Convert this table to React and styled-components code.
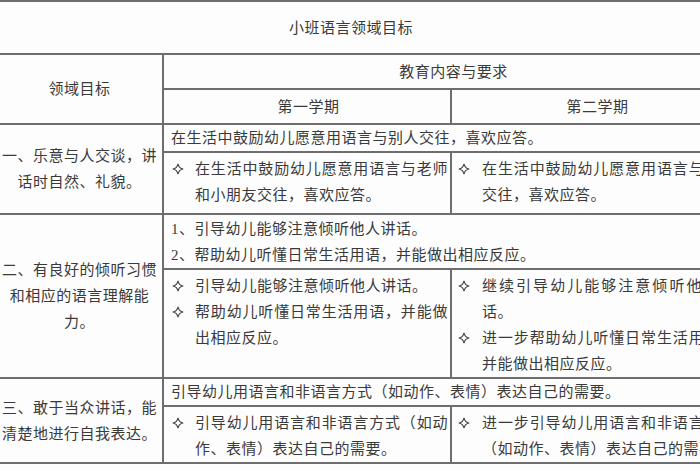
import React from 'react';
import styled, { createGlobalStyle } from 'styled-components';

const GlobalStyle = createGlobalStyle`
  html, body {
    margin: 0;
    padding: 0;
    background: #fff;
  }
`;

const Page = styled.div`
  width: 700px;
  height: 470px;
  overflow: hidden;
  background: #fdfdfd;
  color: #3a3a3a;
  font-family: "Liberation Serif", "Noto Sans CJK SC", serif;
  font-size: 15px;
  letter-spacing: 0.5px;
`;

const Table = styled.table`
  margin-left: -5px;
  width: 745px;
  border-collapse: collapse;
  table-layout: fixed;
`;

const Cell = styled.td`
  border: 2px solid #6e6e6e;
  height: ${p => p.$h}px;
  padding: ${p => p.$pad || '0 4px 0 7px'};
  text-align: ${p => p.$align || 'left'};
  vertical-align: ${p => p.$valign || 'middle'};
  line-height: 26px;
  box-sizing: border-box;
`;

const Line = styled.div`
  white-space: nowrap;
`;

const Item = styled.div`
  display: flex;
  align-items: flex-start;
`;

const Mark = styled.span`
  flex: 0 0 ${p => p.$w}px;
  height: 26px;
  display: flex;
  align-items: center;
  padding-left: 2px;
`;

const ItemText = styled.span`
  flex: 1;
  text-align: justify;
`;

const Star = () => (
  <svg width="12" height="12" viewBox="0 0 12 12">
    <path
      d="M6 0.8 Q6.8 5.2 11.2 6 Q6.8 6.8 6 11.2 Q5.2 6.8 0.8 6 Q5.2 5.2 6 0.8 Z"
      fill="none"
      stroke="#444"
      strokeWidth="1.1"
    />
  </svg>
);

const Bullets = ({ items, markW }) => (
  <>
    {items.map(t => (
      <Item key={t}>
        <Mark $w={markW}><Star /></Mark>
        <ItemText>{t}</ItemText>
      </Item>
    ))}
  </>
);

const rows = [
  {
    goal: '一、乐意与人交谈，讲话时自然、礼貌。',
    full: ['在生活中鼓励幼儿愿意用语言与别人交往，喜欢应答。'],
    fullH: 26,
    splitH: 62,
    first: ['在生活中鼓励幼儿愿意用语言与老师和小朋友交往，喜欢应答。'],
    second: ['在生活中鼓励幼儿愿意用语言与别人交往，喜欢应答。'],
  },
  {
    goal: '二、有良好的倾听习惯和相应的语言理解能力。',
    full: ['1、引导幼儿能够注意倾听他人讲话。', '2、帮助幼儿听懂日常生活用语，并能做出相应反应。'],
    fullH: 55,
    splitH: 109,
    first: ['引导幼儿能够注意倾听他人讲话。', '帮助幼儿听懂日常生活用语，并能做出相应反应。'],
    second: ['继续引导幼儿能够注意倾听他人讲话。', '进一步帮助幼儿听懂日常生活用语，并能做出相应反应。'],
  },
  {
    goal: '三、敢于当众讲话，能清楚地进行自我表达。',
    full: ['引导幼儿用语言和非语言方式（如动作、表情）表达自己的需要。'],
    fullH: 28,
    splitH: 52,
    first: ['引导幼儿用语言和非语言方式（如动作、表情）表达自己的需要。'],
    second: ['进一步引导幼儿用语言和非语言方式（如动作、表情）表达自己的需要。'],
  },
];

export default function App() {
  return (
    <Page>
      <GlobalStyle />
      <Table>
        <colgroup>
          <col style={{ width: 167 }} />
          <col style={{ width: 288 }} />
          <col style={{ width: 290 }} />
        </colgroup>
        <tbody>
          <tr>
            <Cell colSpan={3} $h={53} $align="center" $pad="0 35px 0 0">
              小班语言领域目标
            </Cell>
          </tr>
          <tr>
            <Cell rowSpan={2} $align="center" $pad="0 4px">领域目标</Cell>
            <Cell colSpan={2} $h={35} $align="center">教育内容与要求</Cell>
          </tr>
          <tr>
            <Cell $h={35} $align="center">第一学期</Cell>
            <Cell $h={35} $align="center">第二学期</Cell>
          </tr>
          {rows.map(r => (
            <React.Fragment key={r.goal}>
              <tr>
                <Cell rowSpan={2} $align="center" $pad="0 4px">{r.goal}</Cell>
                <Cell colSpan={2} $h={r.fullH}>
                  {r.full.map(t => <Line key={t}>{t}</Line>)}
                </Cell>
              </tr>
              <tr>
                <Cell $h={r.splitH} $valign="top" $pad="3px 2px 0 6px">
                  <Bullets items={r.first} markW={23} />
                </Cell>
                <Cell $h={r.splitH} $valign="top" $pad="3px 4px 0 4px">
                  <Bullets items={r.second} markW={24} />
                </Cell>
              </tr>
            </React.Fragment>
          ))}
        </tbody>
      </Table>
    </Page>
  );
}
